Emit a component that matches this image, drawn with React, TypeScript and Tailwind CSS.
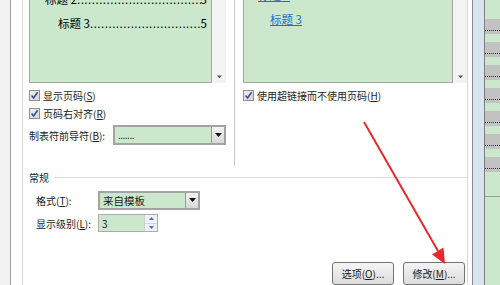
import React from "react"

const FONT = { fontFamily: '"Noto Sans CJK SC", "Noto Sans", sans-serif' }

function Check() {
  return (
    <span className="flex h-[11px] w-[11px] shrink-0 items-center justify-center border border-[#8e8f8f] bg-gradient-to-br from-[#f0f0f0] to-[#d6d6d6]">
      <svg width="9" height="9" viewBox="0 0 9 9">
        <path d="M1.5 4.5 L3.6 7 L7.6 1.2" fill="none" stroke="#3c4f86" strokeWidth="1.6" />
      </svg>
    </span>
  )
}

function DropBtn() {
  return (
    <span className="flex h-full w-[13px] shrink-0 items-center justify-center border-l border-[#9a9a9a] bg-gradient-to-b from-[#f4f4f4] to-[#d8d8d8]">
      <svg width="7" height="4" viewBox="0 0 7 4">
        <path d="M0 0 H7 L3.5 4 Z" fill="#111" />
      </svg>
    </span>
  )
}

function Scroll() {
  return (
    <div className="flex h-full w-[14px] flex-col justify-end bg-[#f3f3f3] pb-[4px]">
      <svg width="14" height="4" viewBox="0 0 14 4">
        <path d="M5 0.5 H10 L7.5 3.2 Z" fill="#555" />
      </svg>
    </div>
  )
}

const DOTS = ".".repeat(80)

export default function App() {
  return (
    <div className="relative flex h-[285px] w-[500px] overflow-hidden bg-white text-[10px] text-[#1b1b1b]" style={FONT}>
      {/* left window edge */}
      <div className="h-full w-[11px] shrink-0 border-r border-[#9c9c9c] bg-[#f2f2f2]" />

      {/* dialog */}
      <div className="flex h-full w-[462px] shrink-0 border-r border-[#8b8b8b] bg-white pl-[11px] pr-[4px]">
        <div className="flex h-full w-[446px] flex-col border-x border-[#d9d9d9]">
          {/* previews */}
          <div className="flex h-[168px]">
            <div className="flex w-[210px] flex-col pl-[6px]">
              <div className="flex h-[83px]">
                <div className="h-full w-[183px] overflow-hidden border border-t-0 border-[#a5a5a5] bg-[#cbe8cd] text-[11.5px] text-black">
                  <div className="-mt-[12px]">
                    <div className="flex h-[24px] items-center pl-[15px] pr-[4px]">
                      <span className="whitespace-nowrap">标题 2</span>
                      <span className="flex-1 overflow-hidden whitespace-nowrap tracking-[0.5px]">{DOTS}</span>
                      <span>3</span>
                    </div>
                    <div className="flex h-[24px] items-center pl-[28px] pr-[4px]">
                      <span className="whitespace-nowrap">标题 3</span>
                      <span className="flex-1 overflow-hidden whitespace-nowrap tracking-[0.5px]">{DOTS}</span>
                      <span>5</span>
                    </div>
                  </div>
                </div>
                <Scroll />
              </div>
              <div className="mt-[3px] flex h-[18px] items-center gap-[3px]">
                <Check />
                <span>显示页码(<u>S</u>)</span>
              </div>
              <div className="flex h-[19px] items-center gap-[3px]">
                <Check />
                <span>页码右对齐(<u>R</u>)</span>
              </div>
              <div className="mt-[2px] flex h-[20px] items-center">
                <span className="w-[84px]">制表符前导符(<u>B</u>):</span>
                <div className="flex h-full w-[113px] items-center border-2 border-[#a3a3a3] bg-[#cbe8cd]">
                  <span className="flex-1 pl-[3px] leading-none tracking-[-0.5px]">.......</span>
                  <DropBtn />
                </div>
              </div>
            </div>

            <div className="ml-[1px] w-px bg-[#c9c9c9]" />

            <div className="flex flex-1 flex-col pl-[8px]">
              <div className="flex h-[83px]">
                <div className="h-full w-[210px] overflow-hidden border border-t-0 border-[#a5a5a5] bg-[#cbe8cd] text-[11.5px] text-[#1f6fc4]">
                  <div className="-mt-[16px]">
                    <div className="flex h-[24px] items-center pl-[14px]">
                      <span className="underline">标题 2</span>
                    </div>
                    <div className="flex h-[24px] items-center pl-[26px]">
                      <span className="underline">标题 3</span>
                    </div>
                  </div>
                </div>
                <Scroll />
              </div>
              <div className="mt-[3px] flex h-[18px] items-center gap-[3px]">
                <Check />
                <span>使用超链接而不使用页码(<u>H</u>)</span>
              </div>
            </div>
          </div>

          {/* general */}
          <div className="mt-[4px] flex h-[16px] items-center pl-[6px]">
            <span className="mr-[5px]">常规</span>
            <div className="h-px flex-1 bg-[#dcdcdc]" />
          </div>
          <div className="mt-[5px] flex h-[20px] items-center pl-[13px]">
            <span className="w-[62px]">格式(<u>T</u>):</span>
            <div className="flex h-full w-[102px] items-center border-2 border-[#a3a3a3] bg-[#cbe8cd]">
              <span className="flex-1 pl-[3px] text-[10.5px]">来自模板</span>
              <DropBtn />
            </div>
          </div>
          <div className="mt-[4px] flex h-[18px] items-center pl-[13px]">
            <span className="w-[62px]">显示级别(<u>L</u>):</span>
            <div className="flex h-full w-[60px] border border-[#acacac] bg-white">
              <span className="flex flex-1 items-center bg-[#cbe8cd] pl-[3px]">3</span>
              <div className="flex w-[13px] flex-col border-l border-[#d0d0d0]">
                <span className="flex flex-1 items-center justify-center border-b border-[#d8d8d8] bg-[#eef1f5]">
                  <svg width="5" height="3" viewBox="0 0 5 3"><path d="M0 3 L2.5 0 L5 3 Z" fill="#4b6fa6" /></svg>
                </span>
                <span className="flex flex-1 items-center justify-center bg-[#eef1f5]">
                  <svg width="5" height="3" viewBox="0 0 5 3"><path d="M0 0 L5 0 L2.5 3 Z" fill="#4b6fa6" /></svg>
                </span>
              </div>
            </div>
          </div>

          {/* buttons */}
          <div className="mt-[30px] flex justify-end gap-[9px] pr-[2px]">
            <button className="h-[23px] w-[62px] rounded-[3px] border border-[#737373] bg-gradient-to-b from-[#f5f5f5] to-[#dcdcdc] text-[10px]">
              选项(<u>O</u>)...
            </button>
            <button className="h-[23px] w-[62px] rounded-[3px] border border-[#737373] bg-gradient-to-b from-[#f5f5f5] to-[#dcdcdc] text-[10px]">
              修改(<u>M</u>)...
            </button>
          </div>
        </div>
      </div>

      {/* word window behind */}
      <div className="h-full w-[12px] shrink-0 border-r border-[#7f7f7f] bg-[#d8e4f0]" />
      <div className="flex h-full flex-1 flex-col gap-[8px] bg-[#cbe8cd] pt-[19px]">
        {[0, 1, 2, 3, 4, 5, 6].map((i) => (
          <div key={i} className="h-[15px] bg-[#c2c2c2] pt-[11px]">
            <div className="border-t border-dotted border-[#333]" />
          </div>
        ))}
        <div className="mt-[16px] h-px bg-[#9a9a9a]" />
      </div>

      {/* red arrow overlay */}
      <svg className="pointer-events-none absolute left-0 top-0" width="500" height="285" viewBox="0 0 500 285">
        <line x1="364" y1="122" x2="438" y2="251" stroke="#e8292b" strokeWidth="2" />
        <path d="M445 264 L443.5 247.5 L432 254.5 Z" fill="#e8292b" />
      </svg>
    </div>
  )
}
